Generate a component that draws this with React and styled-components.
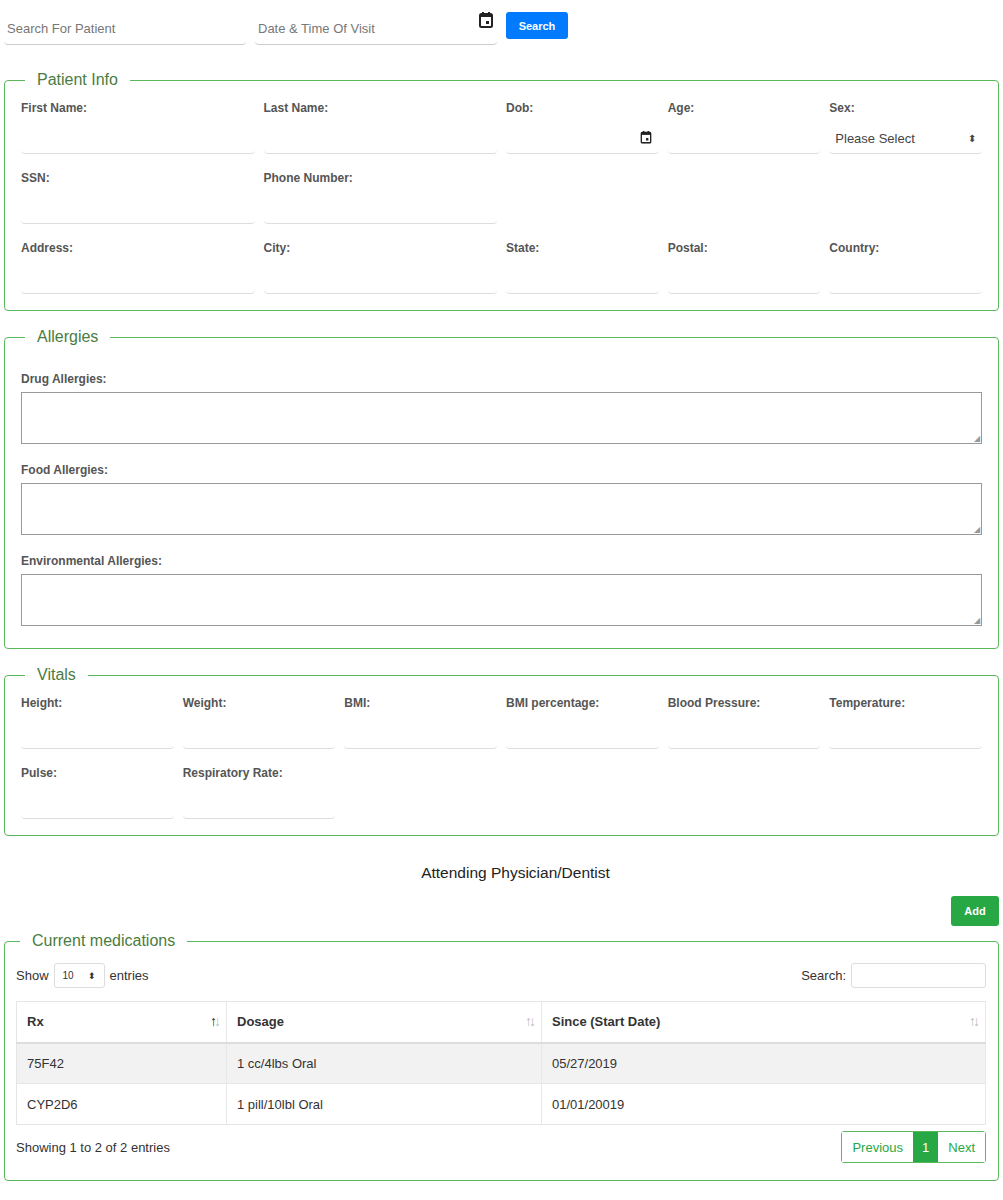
import React from "react";
import styled, { createGlobalStyle } from "styled-components";

const G = createGlobalStyle`
  body { margin: 0; font-family: "Liberation Sans", Arial, sans-serif; color: #333; background: #fff; }
  * { box-sizing: border-box; }
`;
const Page = styled.div` padding: 12px 4px 6px 4px; width: 1003px; `;
const TopBar = styled.div` display: flex; align-items: flex-start; gap: 9px; margin-bottom: 26px; `;
const TopInput = styled.div`
  width: 242px; height: 33px; border-bottom: 1px solid #ccc; border-radius: 0 0 4px 4px;
  display: flex; align-items: center; justify-content: space-between; padding: 0 4px 0 3px;
  font-size: 13px; color: #777;
`;
const Btn = styled.button`
  background: ${p => p.$bg}; color: #fff; border: none; border-radius: 3px;
  font: bold 11px "Liberation Sans", Arial, sans-serif; padding: 0; width: ${p => p.$w}px; height: ${p => p.$h}px;
`;
const Fieldset = styled.fieldset`
  border: 1px solid #5cb85c; border-radius: 4px; margin: ${p => p.$mt || 0}px 0 ${p => p.$mb ?? 17}px 0;
  padding: ${p => p.$pad || "8px 16px 16px 16px"};
`;
const Legend = styled.legend`
  color: #4a7c3f; font-size: 16px; padding: 0 12px; margin-left: 4px;
`;
const Grid = styled.div` display: grid; grid-template-columns: repeat(12, 1fr); column-gap: 9px; row-gap: 13px; `;
const Field = styled.div` grid-column: span ${p => p.$span}; height: 57px; display: flex; flex-direction: column; `;
const Label = styled.label` display: block; font-size: 12px; font-weight: bold; color: #555; margin-top: ${p => p.$mt || 4}px; `;
const Line = styled.div`
  margin-top: auto; height: 30px; border-bottom: 1px solid #ddd; border-radius: 0 0 4px 4px;
  display: flex; align-items: center; justify-content: space-between; padding: 0 6px; font-size: 13px; color: #444;
`;
const Area = styled.div`
  height: 52px; border: 1px solid #999; margin: 6px 0 ${p => p.$mb ?? 19}px 0; position: relative;
`;
const Grip = styled.span` position: absolute; right: 1px; bottom: 0; font-size: 8px; color: #999; `;
const Center = styled.div` text-align: center; font-size: 15.5px; color: #222; margin: 28px 0 14px; padding-left: 28px; `;
const Right = styled.div` display: flex; justify-content: flex-end; `;
const Bar = styled.div` display: flex; justify-content: space-between; align-items: center; font-size: 13px; margin: 9px 0 13px; `;
const Inline = styled.div` display: flex; align-items: center; gap: 5px; `;
const Small = styled.div`
  width: 51px; height: 25px; border: 1px solid #ddd; border-radius: 3px; font-size: 10px;
  display: flex; align-items: center; justify-content: space-between; padding: 0 8px;
`;
const SBox = styled.div` width: 135px; height: 25px; border: 1px solid #ddd; border-radius: 3px; `;
const Table = styled.table` width: 100%; border-collapse: collapse; font-size: 13px; border: 1px solid #e5e5e5; `;
const Th = styled.th`
  text-align: left; padding: 0 10px; height: 41px; border-right: 1px solid #e8e8e8; border-bottom: 2px solid #ddd;
  position: relative; width: ${p => p.$w || "auto"};
`;
const Sort = styled.span` position: absolute; right: 8px; top: 11px; font-size: 14px; letter-spacing: -3px; color: ${p => p.$c}; `;
const Tr = styled.tr` background: ${p => (p.$odd ? "#f2f2f2" : "#fff")}; `;
const Td = styled.td` padding: 0 10px; height: 41px; border-right: 1px solid #e8e8e8; border-top: 1px solid #e5e5e5; `;
const Foot = styled.div` display: flex; justify-content: space-between; align-items: center; font-size: 13px; margin-top: 6px; `;
const Pager = styled.div` display: flex; border: 1px solid #5cb85c; border-radius: 3px; height: 32px; font-size: 13px; `;
const PItem = styled.span`
  display: flex; align-items: center; padding: 0 ${p => p.$px}px;
  color: ${p => (p.$act ? "#fff" : "#28a745")}; background: ${p => (p.$act ? "#28a745" : "#fff")};
`;

const Cal = () => (
  <svg width="14" height="16" viewBox="0 0 14 16"><rect x="1" y="2" width="12" height="13" rx="1.5" fill="none" stroke="#222" strokeWidth="2"/><rect x="1" y="2" width="12" height="3" fill="#222"/><rect x="3" y="0" width="2" height="3" fill="#222"/><rect x="9" y="0" width="2" height="3" fill="#222"/><rect x="7" y="9" width="3" height="3" fill="#222"/></svg>
);

const F = ({ span, label, children }) => (
  <Field $span={span}><Label>{label}</Label><Line>{children}</Line></Field>
);

export default function App() {
  return (
    <Page>
      <G />
      <TopBar>
        <TopInput>Search For Patient</TopInput>
        <TopInput>Date &amp; Time Of Visit <span style={{ marginTop: -14 }}><Cal /></span></TopInput>
        <Btn $bg="#007bff" $w={62} $h={27}>Search</Btn>
      </TopBar>

      <Fieldset>
        <Legend>Patient Info</Legend>
        <Grid>
          <F span={3} label="First Name:" /><F span={3} label="Last Name:" />
          <F span={2} label="Dob:"><span /><span style={{ transform: "scale(0.8)" }}><Cal /></span></F>
          <F span={2} label="Age:" />
          <F span={2} label="Sex:">Please Select <span style={{ fontSize: 10 }}>⬍</span></F>
          <F span={3} label="SSN:" /><F span={3} label="Phone Number:" /><Field $span={6} />
          <F span={3} label="Address:" /><F span={3} label="City:" />
          <F span={2} label="State:" /><F span={2} label="Postal:" /><F span={2} label="Country:" />
        </Grid>
      </Fieldset>

      <Fieldset>
        <Legend>Allergies</Legend>
        <Label $mt={18}>Drug Allergies:</Label><Area><Grip>◢</Grip></Area>
        <Label>Food Allergies:</Label><Area><Grip>◢</Grip></Area>
        <Label>Environmental Allergies:</Label><Area $mb={6}><Grip>◢</Grip></Area>
      </Fieldset>

      <Fieldset $mb={0}>
        <Legend>Vitals</Legend>
        <Grid>
          {["Height:", "Weight:", "BMI:", "BMI percentage:", "Blood Pressure:", "Temperature:", "Pulse:", "Respiratory Rate:"].map(l => (
            <F key={l} span={2} label={l} />
          ))}
        </Grid>
      </Fieldset>

      <Center>Attending Physician/Dentist</Center>
      <Right><Btn $bg="#28a745" $w={48} $h={30}>Add</Btn></Right>

      <Fieldset $mb={0} $mt={6} $pad="4px 12px 17px 11px">
        <Legend>Current medications</Legend>
        <Bar>
          <Inline>Show <Small>10 <span style={{ fontSize: 9 }}>⬍</span></Small> entries</Inline>
          <Inline>Search: <SBox /></Inline>
        </Bar>
        <Table>
          <thead>
            <tr>
              <Th $w="210px">Rx<Sort $c="#222">↑<span style={{ color: "#bbb" }}>↓</span></Sort></Th>
              <Th $w="315px">Dosage<Sort $c="#bbb">↑↓</Sort></Th>
              <Th>Since (Start Date)<Sort $c="#bbb">↑↓</Sort></Th>
            </tr>
          </thead>
          <tbody>
            <Tr $odd><Td>75F42</Td><Td>1 cc/4lbs Oral</Td><Td>05/27/2019</Td></Tr>
            <Tr><Td>CYP2D6</Td><Td>1 pill/10lbl Oral</Td><Td>01/01/20019</Td></Tr>
          </tbody>
        </Table>
        <Foot>
          <span>Showing 1 to 2 of 2 entries</span>
          <Pager><PItem $px={10}>Previous</PItem><PItem $px={9} $act>1</PItem><PItem $px={10}>Next</PItem></Pager>
        </Foot>
      </Fieldset>
    </Page>
  );
}
